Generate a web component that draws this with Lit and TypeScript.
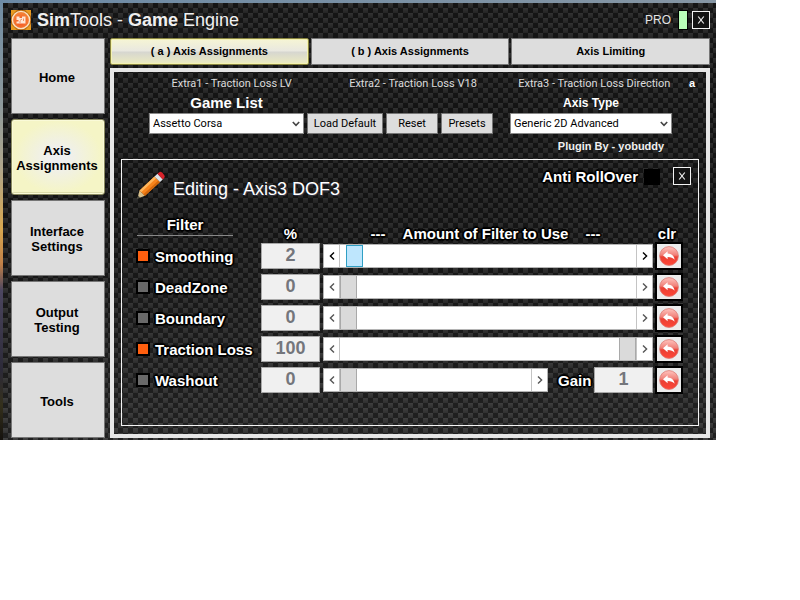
import { LitElement, html, css, nothing } from "lit";
import { customElement, property, state } from "lit/decorators.js";
import { classMap } from "lit/directives/class-map.js";

interface Filter {
  id: string;
  name: string;
  on: boolean;
  value: number;
  active?: boolean;
  gain?: number;
}

const NAV = [
  ["Home"],
  ["Axis", "Assignments"],
  ["Interface", "Settings"],
  ["Output", "Testing"],
  ["Tools"],
];

const TABS = ["( a ) Axis Assignments", "( b ) Axis Assignments", "Axis Limiting"];

const FILTERS: Filter[] = [
  { id: "smoothing", name: "Smoothing", on: true, value: 2, active: true },
  { id: "deadzone", name: "DeadZone", on: false, value: 0 },
  { id: "boundary", name: "Boundary", on: false, value: 0 },
  { id: "traction", name: "Traction Loss", on: true, value: 100 },
  { id: "washout", name: "Washout", on: false, value: 0, gain: 1 },
];

const cross = html`<svg viewBox="0 0 8 8" width="8" height="8" aria-hidden="true">
  <path d="M1.2 0.5 L6.8 7.5 M6.8 0.5 L1.2 7.5" fill="none" stroke="#f0f0f0" stroke-width="1.2" />
</svg>`;

@customElement("filter-row")
export class FilterRow extends LitElement {
  @property({ attribute: false }) filter!: Filter;

  static styles = css`
    * { box-sizing: border-box; }
    :host {
      display: flex;
      align-items: center;
      height: 27px;
      font: bold 15px/18px "Liberation Sans", Arial, sans-serif;
      color: #fff;
    }
    .name {
      flex: none;
      width: 125px;
      display: flex;
      align-items: center;
      gap: 5px;
      white-space: nowrap;
    }
    .outlined {
      padding-top: 2px;
      text-shadow: -1px -1px 0 #000, 1px -1px 0 #000, -1px 1px 0 #000, 1px 1px 0 #000,
        0 2px 1px #000, 0 -2px 1px #000, 2px 0 1px #000, -2px 0 1px #000;
    }
    .tick {
      appearance: none;
      flex: none;
      width: 14px;
      height: 14px;
      margin: 0;
      border: 2px solid #000;
      background: #696969;
    }
    .tick:checked { background: #ff5f0f; }
    .number {
      flex: none;
      width: 59px;
      height: 26px;
      padding: 0;
      border: 1px solid #a8a8a8;
      border-radius: 0;
      background: #f0f0f0;
      color: #74767c;
      font: bold 18px/24px "Liberation Sans", Arial, sans-serif;
      text-align: center;
    }
    .scroll {
      flex: 1;
      min-width: 0;
      display: flex;
      height: 24px;
      margin: 0 2px 0 3px;
      border: 1px solid #b4b4b4;
      background: #fff;
    }
    .step {
      flex: none;
      width: 16px;
      padding: 0;
      border: 0;
      background: #fff;
      color: #555;
      display: flex;
      align-items: center;
      justify-content: center;
    }
    .step.down { border-right: 1px solid #c4c4c4; }
    .step.up { border-left: 1px solid #c4c4c4; }
    .active .step { color: #000; }
    .range {
      appearance: none;
      flex: 1;
      min-width: 0;
      margin: 0;
      height: 22px;
      background: #fff;
    }
    .range::-webkit-slider-thumb {
      appearance: none;
      width: 17px;
      height: 22px;
      border: solid #a9a9a9;
      border-width: 0 1px;
      background: #dadada;
    }
    .active .range::-webkit-slider-thumb {
      border: 1px solid #2f9fc4;
      background: #bee6fd;
    }
    .gain {
      flex: none;
      width: 95px;
      display: flex;
      align-items: center;
      justify-content: space-between;
      margin: 0 2px 0 8px;
    }
    .clear {
      flex: none;
      width: 28px;
      height: 28px;
      padding: 0;
      border: 2px solid #000;
      background: #ececec;
      display: flex;
      align-items: center;
      justify-content: center;
    }
  `;

  render() {
    const f = this.filter;
    return html`
      <label class="name">
        <input class="tick" type="checkbox" .checked=${f.on} />
        <span class="outlined">${f.name}</span>
      </label>
      <input class="number" type="text" readonly aria-label="${f.name} percent" .value=${String(f.value)} />
      <div class=${classMap({ scroll: true, active: !!f.active })}>
        <button class="step down" aria-label="Decrease ${f.name}">
          <svg viewBox="0 0 6 8" width="6" height="8">
            <path d="M5 0.5 L1.4 4 L5 7.5" fill="none" stroke="currentColor" stroke-width="1.4" />
          </svg>
        </button>
        <input class="range" type="range" min="0" max="100" aria-label="${f.name} amount" .value=${String(f.value)} />
        <button class="step up" aria-label="Increase ${f.name}">
          <svg viewBox="0 0 6 8" width="6" height="8">
            <path d="M1 0.5 L4.6 4 L1 7.5" fill="none" stroke="currentColor" stroke-width="1.4" />
          </svg>
        </button>
      </div>
      ${f.gain === undefined
        ? nothing
        : html`<label class="gain">
            <span class="outlined">Gain</span>
            <input class="number" type="text" readonly .value=${String(f.gain)} />
          </label>`}
      <button class="clear" aria-label="Clear ${f.name}">
        <svg viewBox="0 0 22 22" width="22" height="22">
          <defs>
            <linearGradient id="ball" x1="0" y1="0" x2="0" y2="1">
              <stop offset="0" stop-color="#ffc4be" />
              <stop offset="0.45" stop-color="#f08078" />
              <stop offset="0.55" stop-color="#ea4034" />
              <stop offset="1" stop-color="#ff4636" />
            </linearGradient>
          </defs>
          <circle cx="11" cy="11" r="9.4" fill="url(#ball)" stroke="#dc7a74" stroke-width="0.8" />
          <path
            d="M5 10.200 L9.600 6.200 L9.600 8.400 C13.600 8.500 16.200 10.800 16.600 14.800 C14.800 12.800 13 12 9.600 12 L9.600 14.200 Z"
            fill="#fff"
          />
        </svg>
      </button>
    `;
  }
}

@customElement("app-root")
export class AppRoot extends LitElement {
  @state() private page = 1;
  @state() private tab = 0;

  static styles = css`
    * { box-sizing: border-box; }
    :host {
      display: block;
      min-height: 100vh;
      background: #fff;
      font: 12px/14px "Liberation Sans", Arial, sans-serif;
      color: #f0f0f0;
    }
    .desktop {
      margin-right: 84px;
      padding: 3px 0 0 3px;
      background:
        linear-gradient(90deg, #6c8aa5, #8696a4) top / 100% 3px no-repeat,
        linear-gradient(#6f8ca4 0, #8f9a9c 24%, #b0a68c 38%, #d8a850 52%, #c08048 60%, #4c4660 66%, #2c2a38 84%, #34301c 92%, #15120e 100%);
    }
    .window {
      padding: 0 6px 2px 8px;
      background:
        linear-gradient(rgba(0, 0, 0, 0.12), rgba(0, 0, 0, 0.2) 45%, rgba(255, 255, 255, 0.04)),
        conic-gradient(transparent 25%, #181818 0 50%, transparent 0 75%, #181818 0) 0 0 / 10px 10px,
        linear-gradient(#3a3a3a, #2a2a2a) 0 0 / 5px 5px;
    }
    .titlebar {
      height: 35px;
      display: flex;
      align-items: center;
      padding-bottom: 2px;
    }
    .title {
      flex: 1;
      margin: 0 0 0 6px;
      font-size: 18px;
      line-height: 22px;
      font-weight: normal;
    }
    .pro { color: #e4e4e4; }
    .status {
      width: 10px;
      height: 20px;
      margin: 0 4px 0 7px;
      border: 1px solid #000;
      background: #b8ffb8;
    }
    .close {
      flex: none;
      width: 18px;
      height: 18px;
      padding: 0;
      border: 1px solid #f4f4f4;
      background: #141414;
      display: flex;
      align-items: center;
      justify-content: center;
    }
    .body { display: flex; gap: 5px; }
    .nav {
      flex: none;
      width: 94px;
      display: flex;
      flex-direction: column;
      gap: 5px;
    }
    .nav-item, .tab, .action {
      padding: 0;
      border: 1px solid #767676;
      background: #dddddd;
      color: #000;
      font-family: inherit;
      white-space: nowrap;
    }
    .nav-item {
      height: 76px;
      padding: 2px 2px 0 0;
      font-size: 13px;
      line-height: 15px;
      font-weight: bold;
    }
    .nav-item.current {
      border: 1px solid #8a8a60;
      border-radius: 3px;
      background: radial-gradient(ellipse 44px 36px, #efeff0 20%, #f5f5c6 100%);
      box-shadow: inset 0 0 0 1px #fafad8, inset 0 -3px 0 -1px #dcdcaa;
    }
    .line { display: block; }
    .main { flex: 1; min-width: 0; }
    .tabs { display: flex; gap: 2px; }
    .tab {
      flex: 1;
      height: 27px;
      font-size: 11px;
      line-height: 13px;
      font-weight: bold;
    }
    .tab.current {
      border-color: #8a8640;
      border-radius: 2px;
      background: linear-gradient(#f6f5d4, #e9e8e0 48%, #d6d6d0 52%, #ecebc0);
      box-shadow: inset 0 0 0 1px #f4f2b0;
    }
    .panel {
      margin-top: 3px;
      border: 4px solid #e6e6e6;
      padding: 5px 7px 8px;
    }
    .extras {
      display: grid;
      grid-template-columns: repeat(3, 1fr) 14px;
      padding: 0 0 0 20px;
      text-align: center;
      font: 11px/14px Roboto, "Liberation Sans", sans-serif;
      color: #dcdcdc;
    }
    .mark {
      font: bold 11px/12px "Liberation Sans", Arial, sans-serif;
      color: #fff;
    }
    .setup {
      display: flex;
      align-items: flex-start;
      gap: 3px;
      padding: 3px 27px 0 28px;
      height: 68px;
    }
    .field {
      display: flex;
      flex-direction: column;
      align-items: center;
      text-align: center;
    }
    .field.game { flex: 155; }
    .field.axis { flex: 162; margin-left: 14px; }
    .caption { height: 19px; line-height: 18px; font-weight: bold; color: #fff; }
    .caption.large { font-size: 15px; }
    .caption.small { font-size: 12px; }
    .picker { position: relative; width: 100%; display: block; }
    .select {
      appearance: none;
      display: block;
      width: 100%;
      height: 21px;
      padding: 0 18px 0 3px;
      border: 1px solid #8a8a8a;
      border-radius: 0;
      background: #fff;
      color: #000;
      font: 11px/19px Roboto, "Liberation Sans", sans-serif;
    }
    .chevron { position: absolute; right: 4px; top: 8px; }
    .actions { flex: none; display: flex; gap: 3px; margin-top: 19px; }
    .action {
      height: 21px;
      font: 11px/14px Roboto, "Liberation Sans", sans-serif;
    }
    .action.wide { width: 76px; }
    .action.narrow { width: 52px; }
    .plugin { margin: 6px 0 0 40px; font-size: 11px; line-height: 13px; font-weight: bold; }
    .editor {
      border: 1px solid #f4f4f4;
      padding: 0 15px 32px 14px;
    }
    .editor-head { display: flex; height: 56px; }
    .pencil { flex: none; margin-top: 10px; }
    .editing {
      flex: 1;
      margin: 18px 0 0 7px;
      font-size: 18px;
      line-height: 22px;
      font-weight: normal;
      color: #fff;
      text-shadow: 1px 1px 0 #334;
    }
    .outlined {
      color: #fff;
      text-shadow: -1px -1px 0 #000, 1px -1px 0 #000, -1px 1px 0 #000, 1px 1px 0 #000,
        0 2px 1px #000, 0 -2px 1px #000, 2px 0 1px #000, -2px 0 1px #000;
    }
    .anti {
      display: flex;
      align-items: center;
      gap: 6px;
      height: 18px;
      margin: 8px 13px 0 0;
      font-size: 15px;
      line-height: 18px;
      font-weight: bold;
    }
    .anti-tick { appearance: none; width: 16px; height: 16px; margin: 0; background: #000; }
    .editor-close { margin: 7px -8px 0 0; }
    .heads {
      display: flex;
      height: 26px;
      font-size: 15px;
      line-height: 18px;
      font-weight: bold;
      text-align: center;
    }
    .head-filter { width: 96px; height: 20px; margin: 0 28px 0 1px; border-bottom: 1px solid #888; }
    .head-percent { width: 59px; padding-top: 9px; }
    .head-amount { flex: 1; display: flex; justify-content: center; gap: 17px; padding: 9px 4px 0 0; }
    .head-clear { width: 28px; padding: 9px 4px 0 0; }
    .rows { display: flex; flex-direction: column; gap: 4px; }
  `;

  private chevron() {
    return html`<svg class="chevron" viewBox="0 0 8 6" width="8" height="6" aria-hidden="true">
      <path d="M0.8 1 L4 4.4 L7.2 1" fill="none" stroke="#444" stroke-width="1.6" />
    </svg>`;
  }

  render() {
    return html`
      <div class="desktop">
        <div class="window">
          <header class="titlebar">
            <svg viewBox="0 0 20 20" width="20" height="20" aria-hidden="true">
              <defs>
                <radialGradient id="logo" cx="0.5" cy="0.6" r="0.6">
                  <stop offset="0" stop-color="#f4511e" />
                  <stop offset="1" stop-color="#f58a3c" />
                </radialGradient>
              </defs>
              <rect width="20" height="20" fill="#b86a10" />
              <path d="M0 0h6L0 6zM14 0h6v6zM0 14v6h6zM20 14v6h-6z" fill="#e89a20" />
              <circle cx="10" cy="10" r="8.6" fill="url(#logo)" stroke="#fbe3c4" stroke-width="1.4" />
              <path d="M5.500 6.500h3v1.500h2.500v-1.500h3.500v7h-9v-2h2v-1.500h-2z" fill="#fde6d6" />
              <path d="M9 10.500l2-1.500M12.500 8.500v2.500M8 12h2" fill="none" stroke="#ee7a44" stroke-width="0.8" />
            </svg>
            <h1 class="title"><b>Sim</b>Tools - <b>Game</b> Engine</h1>
            <span class="pro">PRO</span>
            <span class="status"></span>
            <button class="close" aria-label="Close">${cross}</button>
          </header>
          <div class="body">
            <nav class="nav">
              ${NAV.map(
                (lines, i) => html`<button
                  class=${classMap({ "nav-item": true, current: i === this.page })}
                  @click=${() => (this.page = i)}
                >
                  ${lines.map((l) => html`<span class="line">${l}</span>`)}
                </button>`
              )}
            </nav>
            <main class="main">
              <div class="tabs">
                ${TABS.map(
                  (t, i) => html`<button
                    class=${classMap({ tab: true, current: i === this.tab })}
                    @click=${() => (this.tab = i)}
                  >${t}</button>`
                )}
              </div>
              <section class="panel">
                <div class="extras">
                  <span>Extra1 - Traction Loss LV</span>
                  <span>Extra2 - Traction Loss V18</span>
                  <span>Extra3 - Traction Loss Direction</span>
                  <span class="mark">a</span>
                </div>
                <div class="setup">
                  <div class="field game">
                    <label class="caption large" for="game">Game List</label>
                    <span class="picker">
                      <select class="select" id="game"><option>Assetto Corsa</option></select>
                      ${this.chevron()}
                    </span>
                  </div>
                  <div class="actions">
                    <button class="action wide">Load Default</button>
                    <button class="action narrow">Reset</button>
                    <button class="action narrow">Presets</button>
                  </div>
                  <div class="field axis">
                    <label class="caption small" for="axis">Axis Type</label>
                    <span class="picker">
                      <select class="select" id="axis"><option>Generic 2D Advanced</option></select>
                      ${this.chevron()}
                    </span>
                    <span class="plugin">Plugin By - yobuddy</span>
                  </div>
                </div>
                <div class="editor">
                  <div class="editor-head">
                    <svg class="pencil" viewBox="0 0 30 30" width="30" height="30" aria-hidden="true">
                      <path d="M1.500 28.500 L3.500 20.500 L9 25.800 Z" fill="#d8c08c" />
                      <path d="M1.500 28.500 L2.200 25.800 L4.200 27.600 Z" fill="#4a4a40" />
                      <path d="M3.500 20.500 L18.500 6.500 L24 12 L9 25.800 Z" fill="#f8841c" />
                      <path d="M3.500 20.500 L18.500 6.500 L20.200 8.200 L5.200 22.200 Z" fill="#ffb65c" />
                      <path d="M7.400 24.200 L22.400 10.400 L24 12 L9 25.800 Z" fill="#d4680c" />
                      <path d="M18.500 6.500 L21.500 3.800 L26.800 9.400 L24 12 Z" fill="#dde3e8" />
                      <path d="M21.500 3.800 L23 2.400 Q24.500 1.200 26 2.600 L28.200 5 Q29.300 6.600 28.200 8 L26.800 9.400 Z" fill="#d8232b" />
                    </svg>
                    <h2 class="editing">Editing - Axis3 DOF3</h2>
                    <label class="anti">
                      <span class="outlined">Anti RollOver</span>
                      <input class="anti-tick" type="checkbox" />
                    </label>
                    <button class="close editor-close" aria-label="Close editor">${cross}</button>
                  </div>
                  <div class="heads">
                    <span class="head-filter outlined">Filter</span>
                    <span class="head-percent outlined">%</span>
                    <span class="head-amount outlined">
                      <span>---</span><span>Amount of Filter to Use</span><span>---</span>
                    </span>
                    <span class="head-clear outlined">clr</span>
                  </div>
                  <div class="rows">
                    ${FILTERS.map((f) => html`<filter-row .filter=${f}></filter-row>`)}
                  </div>
                </div>
              </section>
            </main>
          </div>
        </div>
      </div>
    `;
  }
}
